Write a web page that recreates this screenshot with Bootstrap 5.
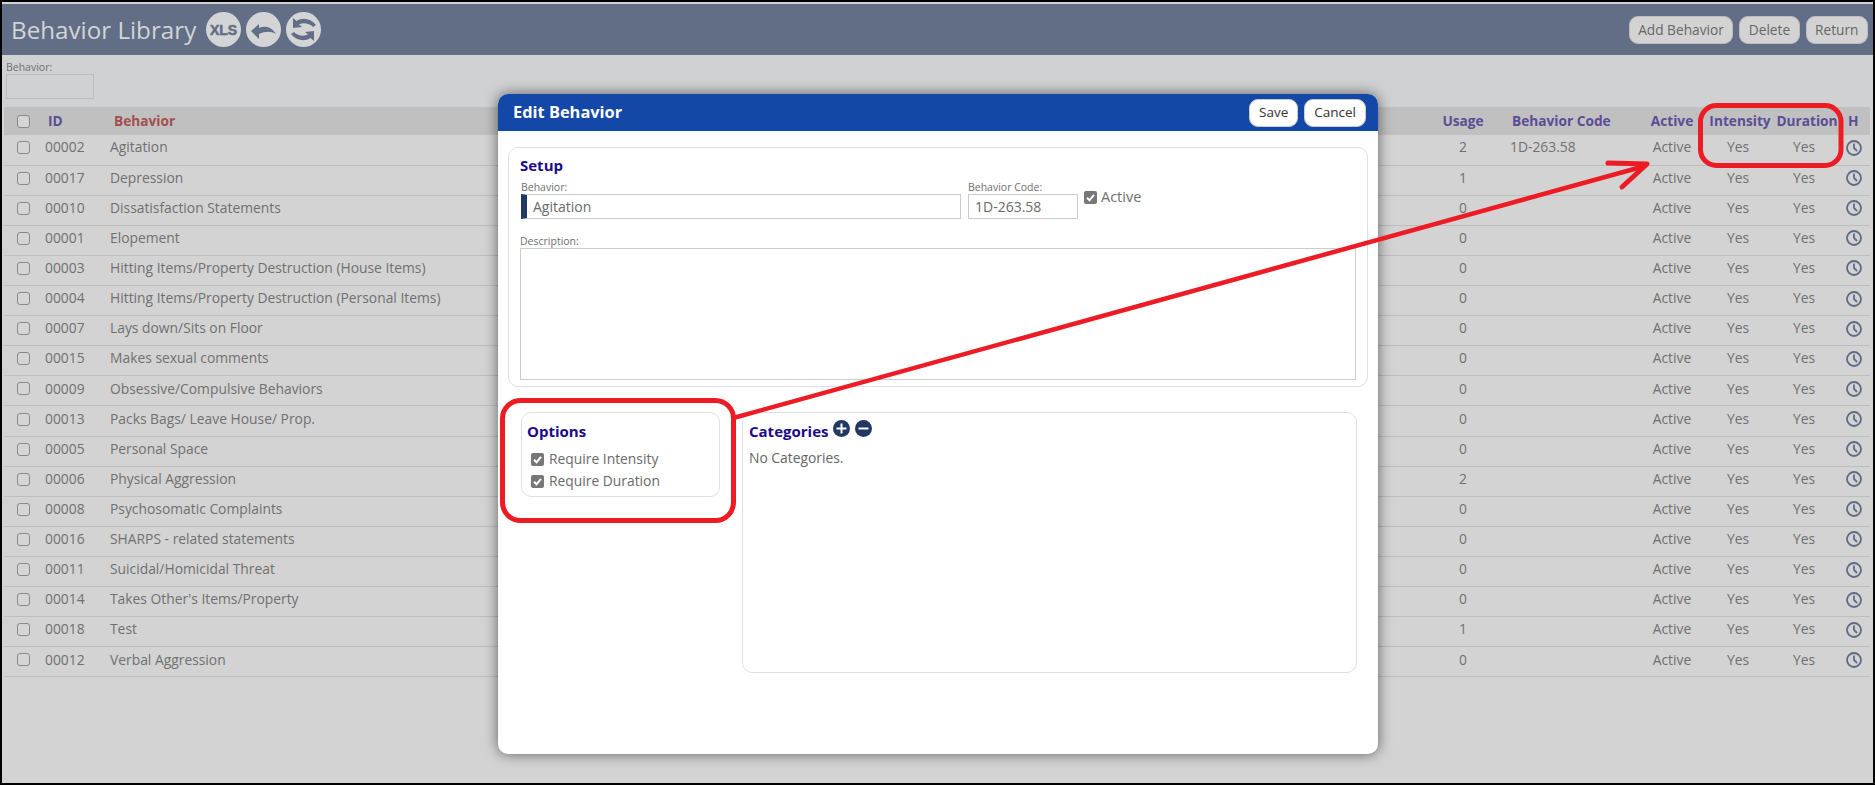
<!DOCTYPE html>
<html lang="en">
<head>
    <meta charset="UTF-8">
    <title>Behavior Library</title>
    <link rel="stylesheet" href="https://cdn.jsdelivr.net/npm/bootstrap@5.3.0/dist/css/bootstrap.min.css">
    <style>
        html, body { height: 100%; overflow: hidden; }
        body { background: #000; font-family: "Open Sans", "Liberation Sans", sans-serif; font-size: 13.85px; color: #6f6f6f; }
        .frame { position: relative; height: 781px; width: 1871px; margin: 2px 2px 0; padding-top: 2px; background: #d3d3d3; overflow: hidden; }
        .top-bar { height: 51px; background: #626e85; padding: 0 5px 0 9px; }
        .page-title { font-size: 24.2px; color: #d3d4d6; margin: 0 10px 0 0; font-weight: 400; }
        .round-icon { width: 35px; height: 35px; margin-right: 5px; display: block; }
        .top-btn { background: #d3d3d3; color: #666; border: 1px solid #bcbcbc; border-radius: 9px; padding: 0 8.5px; height: 28px; line-height: 25px; font-size: 13.7px; }
        .top-btns { gap: 6px; }
        .filter-area { height: 52px; background: #d0d1d3; padding: 6px 0 0 4px; }
        .small-label { display: block; font-size: 10.5px; line-height: 13px; color: #6f6f6f; }
        .filter-box { display: block; width: 88px; height: 25px; background: #d0d1d3; border: 1px solid #bcbdbf; }
        .beh-table { table-layout: fixed; border-collapse: collapse; width: 1866px; margin-left: 2px; }
        .beh-table th { height: 28px; background: #c0c0c0; color: #5b4d96; font-weight: 700; padding: 0; font-size: 13.7px; white-space: nowrap; }
        .beh-table th.sort-col { color: #a34f4f; }
        .beh-table td { height: 30.12px; border-bottom: 1px solid #bebebe; padding: 0 0 4px; color: #707070; white-space: nowrap; }
        .fake-check { display: block; width: 13px; height: 13px; margin-left: 13px; border: 1px solid #8a8a8a; border-radius: 3px; background: #d5d5d5; }
        .beh-table .id-head { padding-left: 8px; }
        .beh-table .id-cell { padding-left: 5px; }
        .beh-table .name-head { padding-left: 4px; }
        .beh-table .name-cell { padding-left: 0; }
        .beh-table .code-head { padding-left: 16px; }
        .beh-table .code-cell { padding-left: 14px; }
        .beh-table .h-head { padding-left: 7px; }
        .beh-table .yes-a { padding-right: 4px; }
        .beh-table .yes-b { padding-right: 6px; }
        .clock-ico { display: block; width: 16px; height: 16px; margin-left: 5px; }
        .edit-modal { position: absolute; left: 496px; top: 92px; width: 880px; height: 660px; background: #fff; border-radius: 10px; box-shadow: 0 0 14px rgba(0,0,0,.55); overflow: hidden; }
        .edit-head { height: 37px; background: #1448a8; padding: 0 12px 0 15px; }
        .edit-head h5 { margin: 0 0 2px; font-size: 16.4px; font-weight: 700; color: #fff; }
        .head-btns { gap: 6px; }
        .head-btn { background: #fff; color: #333; border: 1px solid #ccc; border-radius: 9px; padding: 0 9px; height: 28px; line-height: 25px; font-size: 13.5px; }
        .panel-box { border: 1px solid #dde0e6; border-radius: 10px; background: #fff; }
        .setup-panel { height: 240px; margin: 16px 10px 0; padding: 8px 10px 0 11px; }
        .panel-title { font-size: 15px; font-weight: 700; color: #1b0a8a; line-height: 18px; margin: 0; }
        .field-row { margin: 7px 0 0 1px; }
        .field-main { width: 440px; }
        .field-code { width: 110px; margin-left: 7px; }
        .text-box { height: 25px; border: 1px solid #ccc; font-size: 14px; line-height: 23px; padding-left: 6px; color: #6a6a6a; }
        .main-box { border-left: 6px solid #1f3864; padding-left: 6px; }
        .active-check { margin: 7px 0 0 6px; font-size: 14.5px; line-height: 18px; height: 18px; }
        .tick-box { width: 13px; height: 13px; display: block; flex: none; }
        .desc-box { width: 836px; height: 132px; border: 1px solid #ccc; }
        .lower-row { margin-top: 25px; }
        .options-panel { width: 199px; height: 85px; margin-left: 23px; padding: 9px 0 0 5px; }
        .options-title { margin-bottom: 8px; }
        .option-row { height: 22px; margin-left: 4px; gap: 5px; color: #6a6a6a; }
        .cat-panel { width: 615px; height: 261px; margin-left: 22px; padding: 7px 0 0 6px; }
        .cat-head { gap: 5px; }
        .cat-title { margin-top: 2px; }
        .cat-ico { width: 17px; height: 17px; display: block; }
        .none-text { margin-top: 8px; color: #666; }
        .notes-layer { position: absolute; left: -2px; top: -2px; width: 1875px; height: 785px; pointer-events: none; }
    </style>
</head>
<body>
<div class="frame">
    <div class="top-bar d-flex align-items-center">
        <h1 class="page-title">Behavior Library</h1>
        <svg class="round-icon" viewBox="0 0 35 35"><circle cx="17.5" cy="17.5" r="17.5" fill="#d3d4d6"/><text x="17.5" y="22.5" text-anchor="middle" font-family="Liberation Sans" font-weight="700" font-size="14" stroke="#626e85" stroke-width=".5" fill="#626e85">XLS</text></svg>
        <svg class="round-icon" viewBox="0 0 35 35"><circle cx="17.5" cy="17.5" r="17.5" fill="#d3d4d6"/><path d="M5 19L13 12V16C19 13 26 15 30 22 25 19 19 19 13 22V27Z" fill="#626e85"/></svg>
        <svg class="round-icon" viewBox="0 0 35 35"><circle cx="17.5" cy="17.5" r="17.5" fill="#d3d4d6"/><path d="M7 6L7 16 16 15 13 12.500C17 10.500 23 11 27 15L30 13C25 6.500 16 5 10.500 9Z" fill="#626e85"/><path d="M7 6L7 16 16 15 13 12.500C17 10.500 23 11 27 15L30 13C25 6.500 16 5 10.500 9Z" fill="#626e85" transform="rotate(180 17.5 17.5)"/></svg>
        <div class="ms-auto d-flex top-btns">
            <button class="top-btn">Add Behavior</button>
            <button class="top-btn">Delete</button>
            <button class="top-btn">Return</button>
        </div>
    </div>

    <div class="filter-area">
        <span class="small-label">Behavior:</span>
        <span class="filter-box"></span>
    </div>

    <table class="beh-table">
        <colgroup>
            <col style="width:36px"><col style="width:70px"><col style="width:1320px"><col style="width:66px"><col style="width:141px"><col style="width:70px"><col style="width:66px"><col style="width:68px"><col style="width:29px">
        </colgroup>
        <thead>
            <tr>
                <th><span class="fake-check"></span></th>
                <th class="id-head">ID</th>
                <th class="sort-col name-head">Behavior</th>
                <th class="text-center">Usage</th>
                <th class="code-head">Behavior Code</th>
                <th class="text-center">Active</th>
                <th class="text-center">Intensity</th>
                <th class="text-center">Duration</th>
                <th class="h-head">H</th>
            </tr>
        </thead>
        <tbody id="rows"></tbody>
    </table>

    <div class="edit-modal">
        <div class="edit-head d-flex align-items-center">
            <h5>Edit Behavior</h5>
            <div class="ms-auto d-flex head-btns">
                <button class="head-btn">Save</button>
                <button class="head-btn">Cancel</button>
            </div>
        </div>

        <div class="panel-box setup-panel">
            <p class="panel-title">Setup</p>
            <div class="d-flex field-row">
                <div class="field-main">
                    <span class="small-label">Behavior:</span>
                    <div class="text-box main-box">Agitation</div>
                </div>
                <div class="field-code">
                    <span class="small-label">Behavior Code:</span>
                    <div class="text-box">1D-263.58</div>
                </div>
                <div class="active-check d-flex align-items-center gap-1">
                    <svg class="tick-box" viewBox="0 0 13 13"><rect width="13" height="13" rx="2" fill="#777"/><path d="M3 6.800l2.500 2.500 4.500-5.500" fill="none" stroke="#fff" stroke-width="2"/></svg>
                    Active
                </div>
            </div>
            <span class="small-label mt-3">Description:</span>
            <div class="desc-box"></div>
        </div>

        <div class="d-flex align-items-start lower-row">
            <div class="panel-box options-panel">
                <p class="panel-title options-title">Options</p>
                <div class="option-row d-flex align-items-center">
                    <svg class="tick-box" viewBox="0 0 13 13"><rect width="13" height="13" rx="2" fill="#777"/><path d="M3 6.800l2.500 2.500 4.500-5.500" fill="none" stroke="#fff" stroke-width="2"/></svg>
                    Require Intensity
                </div>
                <div class="option-row d-flex align-items-center">
                    <svg class="tick-box" viewBox="0 0 13 13"><rect width="13" height="13" rx="2" fill="#777"/><path d="M3 6.800l2.500 2.500 4.500-5.500" fill="none" stroke="#fff" stroke-width="2"/></svg>
                    Require Duration
                </div>
            </div>
            <div class="panel-box cat-panel">
                <div class="d-flex align-items-start cat-head">
                    <p class="panel-title cat-title">Categories</p>
                    <svg class="cat-ico" viewBox="0 0 17 17"><circle cx="8.500" cy="8.500" r="8.500" fill="#1f3864"/><path d="M8.500 3.500v10M3.500 8.500h10" stroke="#fff" stroke-width="2"/></svg>
                    <svg class="cat-ico" viewBox="0 0 17 17"><circle cx="8.500" cy="8.500" r="8.500" fill="#1f3864"/><path d="M3.500 8.500h10" stroke="#fff" stroke-width="2"/></svg>
                </div>
                <div class="none-text">No Categories.</div>
            </div>
        </div>
    </div>

    <!-- red annotations drawn over the screenshot -->
    <svg class="notes-layer" viewBox="0 0 1875 785" fill="none" stroke="#ed1c24" stroke-width="5">
        <rect x="1700.500" y="105.500" width="140.500" height="60" rx="16"/>
        <rect x="502.500" y="400.500" width="231" height="120" rx="18"/>
        <path d="M735 417.500L1645 166" stroke-width="4.500"/>
        <path d="M1608 163L1647 164L1622 187" stroke-linecap="round" stroke-linejoin="round"/>
    </svg>
</div>

<script>
    const behaviors = [
        ["00002", "Agitation", 2, "1D-263.58"],
        ["00017", "Depression", 1, ""],
        ["00010", "Dissatisfaction Statements", 0, ""],
        ["00001", "Elopement", 0, ""],
        ["00003", "Hitting Items/Property Destruction (House Items)", 0, ""],
        ["00004", "Hitting Items/Property Destruction (Personal Items)", 0, ""],
        ["00007", "Lays down/Sits on Floor", 0, ""],
        ["00015", "Makes sexual comments", 0, ""],
        ["00009", "Obsessive/Compulsive Behaviors", 0, ""],
        ["00013", "Packs Bags/ Leave House/ Prop.", 0, ""],
        ["00005", "Personal Space", 0, ""],
        ["00006", "Physical Aggression", 2, ""],
        ["00008", "Psychosomatic Complaints", 0, ""],
        ["00016", "SHARPS - related statements", 0, ""],
        ["00011", "Suicidal/Homicidal Threat", 0, ""],
        ["00014", "Takes Other's Items/Property", 0, ""],
        ["00018", "Test", 1, ""],
        ["00012", "Verbal Aggression", 0, ""]
    ];
    const clock = `<svg class="clock-ico" viewBox="0 0 16 16"><circle cx="8" cy="8" r="7" fill="none" stroke="#5f6b85" stroke-width="1.800"/><path d="M8 3.500V8l3 3" fill="none" stroke="#5f6b85" stroke-width="1.800"/></svg>`;
    document.getElementById("rows").innerHTML = behaviors.map(b => `
        <tr>
            <td><span class="fake-check"></span></td>
            <td class="id-cell">${b[0]}</td>
            <td class="name-cell">${b[1]}</td>
            <td class="text-center">${b[2]}</td>
            <td class="code-cell">${b[3]}</td>
            <td class="text-center">Active</td>
            <td class="text-center yes-a">Yes</td>
            <td class="text-center yes-b">Yes</td>
            <td>${clock}</td>
        </tr>`).join("");
</script>
<script src="https://cdn.jsdelivr.net/npm/bootstrap@5.3.0/dist/js/bootstrap.bundle.min.js"></script>
</body>
</html>
